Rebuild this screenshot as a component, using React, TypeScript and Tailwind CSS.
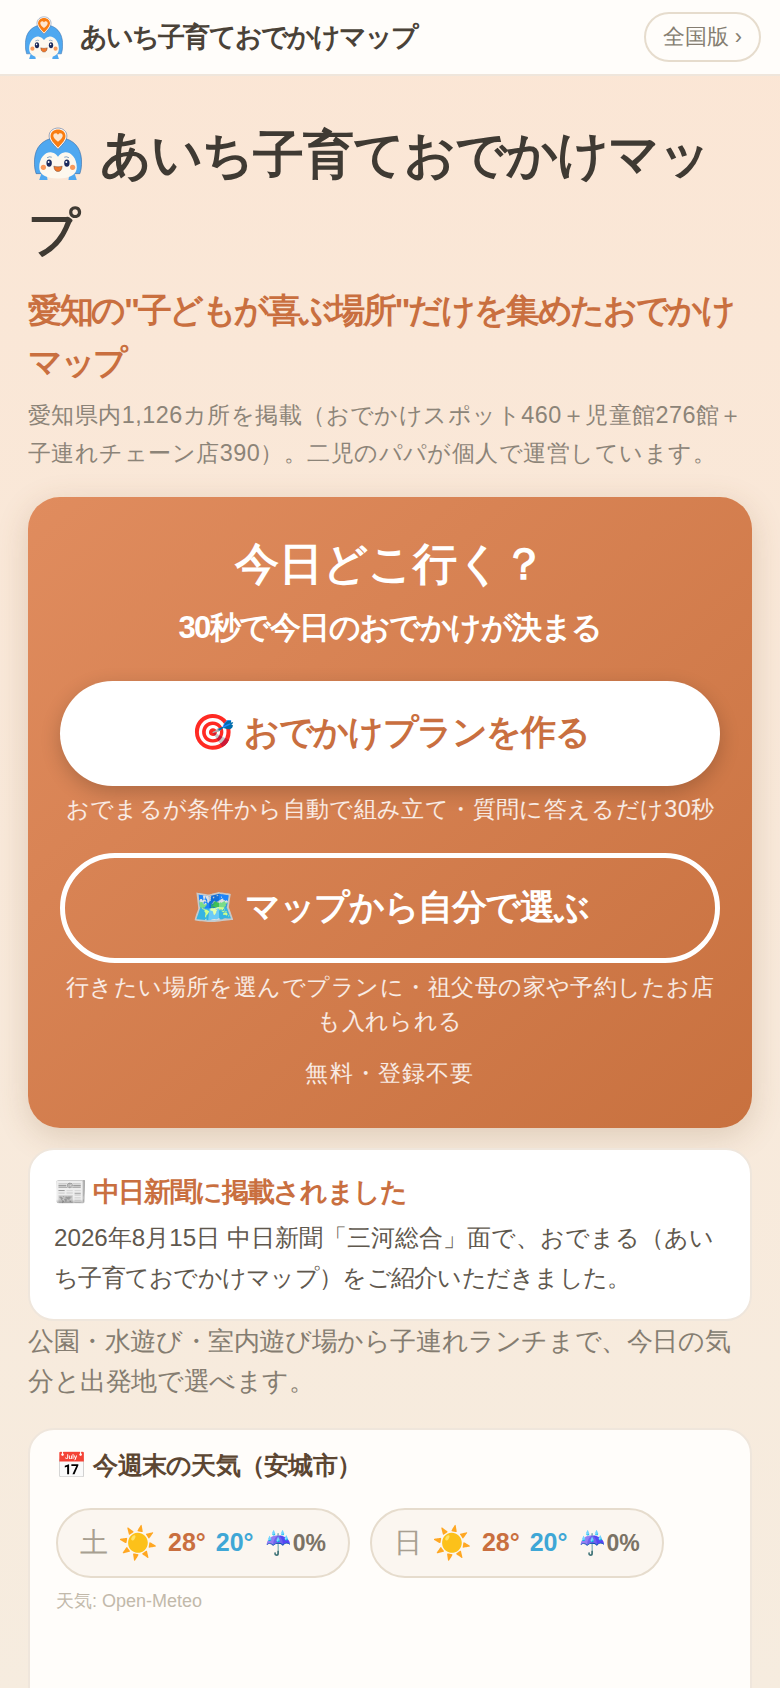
import React from "react";

const FONT = '"Liberation Sans", sans-serif';

function Logo({ className }: { className: string }) {
  return (
    <svg viewBox="2 0 46 50" preserveAspectRatio="none" className={className} aria-hidden="true">
      <path d="M4 44 C2 38 2 32 3 27 C5 16 14 10 25 10 C36 10 45 16 47 27 C48 32 48 38 46 44 Z" fill="#4fa8f0" stroke="#3b6ea8" strokeWidth="0.6" />
      <path d="M7 50 L9 44 L14 44 L15 50 Z" fill="#4fa8f0" />
      <path d="M35 50 L36 44 L41 44 L43 50 Z" fill="#4fa8f0" />
      <path d="M7 38 C7 29 13 23 19 24 C22 24.500 23.500 26 25 28 C26.500 26 28 24.500 31 24 C37 23 43 29 43 38 C43 45 37 48.500 25 48.500 C13 48.500 7 45 7 38 Z" fill="#fdf8ee" />
      <path d="M14.500 29 Q17 27.500 19 28.500" stroke="#3b6ea8" strokeWidth="0.6" fill="none" />
      <path d="M31 28.500 Q33 27.500 35.500 29" stroke="#3b6ea8" strokeWidth="0.6" fill="none" />
      <ellipse cx="16.500" cy="34" rx="2.600" ry="3.400" fill="#1a2a5c" />
      <ellipse cx="33.500" cy="34" rx="2.600" ry="3.400" fill="#1a2a5c" />
      <circle cx="16" cy="33" r="0.900" fill="#fff" />
      <circle cx="33" cy="33" r="0.900" fill="#fff" />
      <circle cx="11" cy="38" r="2.500" fill="#fb9a5b" />
      <circle cx="39" cy="38" r="2.500" fill="#fb9a5b" />
      <path d="M21 37 Q25 38.200 29 37 Q28.500 42 25 42 Q21.500 42 21 37 Z" fill="#f0782a" stroke="#5a3320" strokeWidth="0.4" />
      <path d="M25 21 C20 16 16.500 12.500 16.500 8.500 C16.500 4 20.500 1 25 1 C29.500 1 33.500 4 33.500 8.500 C33.500 12.500 30 16 25 21 Z" fill="#fff" stroke="#3b5b8a" strokeWidth="0.5" />
      <path d="M25 19.500 C21 15.500 17.800 12 17.800 8.500 C17.800 4.800 21 2.300 25 2.300 C29 2.300 32.200 4.800 32.200 8.500 C32.200 12 29 15.500 25 19.500 Z" fill="#f97d12" />
      <path d="M25 14 C22 11.500 20.500 10 20.500 8.300 C20.500 6.800 21.700 6 22.800 6 C23.800 6 24.600 6.600 25 7.400 C25.400 6.600 26.200 6 27.200 6 C28.300 6 29.500 6.800 29.500 8.300 C29.500 10 28 11.500 25 14 Z" fill="#fde6d0" />
    </svg>
  );
}

function WeatherPill({ day }: { day: string }) {
  return (
    <div className="flex h-[70px] items-center gap-[10px] rounded-full border-2 border-[#e6dccd] bg-[#fbf6f0] px-[22px]">
      <span className="text-[28px] text-[#a89f91]">{day}</span>
      <span className="text-[32px] leading-none">☀️</span>
      <span className="text-[25px] font-bold text-[#c96f3f]">28°</span>
      <span className="text-[25px] font-bold text-[#3fa7d6]">20°</span>
      <span className="flex items-center text-[23px] font-bold text-[#7a7265]">
        <span>☔</span>0%
      </span>
    </div>
  );
}

export default function App() {
  return (
    <div
      className="h-[1688px] overflow-hidden bg-gradient-to-b from-[#fbe6d5] to-[#f6ecdf]"
      style={{ fontFamily: FONT }}
    >
      <header className="flex h-[76px] items-center justify-between border-b-2 border-[#efe6dc] bg-[#fffdfa] pl-[25px] pr-[19px]">
        <div className="flex items-center gap-[17px]">
          <Logo className="h-[43px] w-[38px]" />
          <span className="text-[27px] font-bold tracking-[-0.07em] text-[#4a4238]">あいち子育ておでかけマップ</span>
        </div>
        <div className="flex h-[50px] items-center rounded-full border-2 border-[#e6dccd] px-[17px] text-[21.6px] text-[#857d71]">全国版 ›</div>
      </header>
      <main className="px-[28px] pt-[40px]">
        <h1 className="text-[50.8px] font-bold leading-[78px] tracking-[-0.02em] text-[#3f3a33]">
          <Logo className="ml-[6px] mr-[18px] inline-block h-[53px] w-[48px] align-[-8px]" />
          あいち子育ておでかけマップ
        </h1>
        <p className="mt-[12px] text-[33.9px] font-bold leading-[52px] tracking-[-0.07em] text-[#c96f3f]">愛知の"子どもが喜ぶ場所"だけを集めたおでかけマップ</p>
        <p className="mt-[8px] text-[23.4px] leading-[38px] tracking-[0.02em] text-[#8c8478]">愛知県内1,126カ所を掲載（おでかけスポット460＋児童館276館＋子連れチェーン店390）。二児のパパが個人で運営しています。</p>
        <section className="mt-[25px] rounded-[32px] bg-gradient-to-br from-[#e08c5e] to-[#c8713f] px-[32px] pb-[37px] pt-[36px] text-center shadow-[0_8px_32px_rgba(120,80,40,0.2)]">
          <h2 className="text-[43.5px] font-bold leading-[62px] text-white">今日どこ行く？</h2>
          <p className="mt-[11px] text-[31px] font-bold leading-[44px] tracking-[-0.05em] text-white">30秒で今日のおでかけが決まる</p>
          <div className="mt-[31px] flex h-[105px] items-center justify-center gap-[11px] rounded-[53px] bg-white pb-[3px] text-[35px] font-bold tracking-[-0.04em] text-[#c96f3f] shadow-[0_6px_20px_rgba(0,0,0,0.2)]">
            <span>🎯</span>
            <span>おでかけプランを作る</span>
          </div>
          <p className="mt-[4px] text-[23.4px] leading-[38px] tracking-[0.015em] text-white/85">おでまるが条件から自動で組み立て・質問に答えるだけ30秒</p>
          <div className="mt-[25px] flex h-[110px] items-center justify-center gap-[11px] rounded-[55px] border-[5px] border-white pb-[2px] text-[35px] font-bold tracking-[-0.04em] text-white">
            <span>🗺️</span>
            <span>マップから自分で選ぶ</span>
          </div>
          <p className="mt-[7px] text-[23.4px] leading-[34px] tracking-[0.02em] text-white/85">行きたい場所を選んでプランに・祖父母の家や予約したお店も入れられる</p>
          <p className="mt-[17px] text-[23.4px] leading-[36px] tracking-[0.05em] text-white/85">無料・登録不要</p>
        </section>
        <section className="mt-[20px] rounded-[26px] border-2 border-[#efe6dc] bg-white px-[24px] pb-[21px] pt-[20px]">
          <h3 className="text-[27px] font-bold leading-[44px] tracking-[-0.05em] text-[#c96f3f]">📰 中日新聞に掲載されました</h3>
          <p className="mt-[4px] text-[24.2px] leading-[40px] text-[#5f584e]">
            2026年8月15日 中日新聞「三河総合」面で、おでまる（あい<span className="tracking-[-0.03em]">ち子育ておでかけマップ）をご紹介いただきました。</span>
          </p>
        </section>
        <p className="text-[25.6px] leading-[40px] tracking-[-0.4px] text-[#857d71]">公園・水遊び・室内遊び場から子連れランチまで、今日の気分と出発地で選べます。</p>
        <section className="mt-[27px] h-[500px] rounded-[26px] border-2 border-[#efe6dc] bg-[#fffdfa] px-[26px] pt-[15px]">
          <h3 className="flex items-center gap-[7px] text-[25px] font-bold leading-[40px] tracking-[-0.03em] text-[#5c4632]">
            <span>📅</span>
            <span>今週末の天気（安城市）</span>
          </h3>
          <div className="mt-[23px] flex gap-[20px]">
            <WeatherPill day="土" />
            <WeatherPill day="日" />
          </div>
          <p className="mt-[8px] text-[18px] leading-[30px] text-[#c2b9aa]">天気: Open-Meteo</p>
        </section>
      </main>
    </div>
  );
}
